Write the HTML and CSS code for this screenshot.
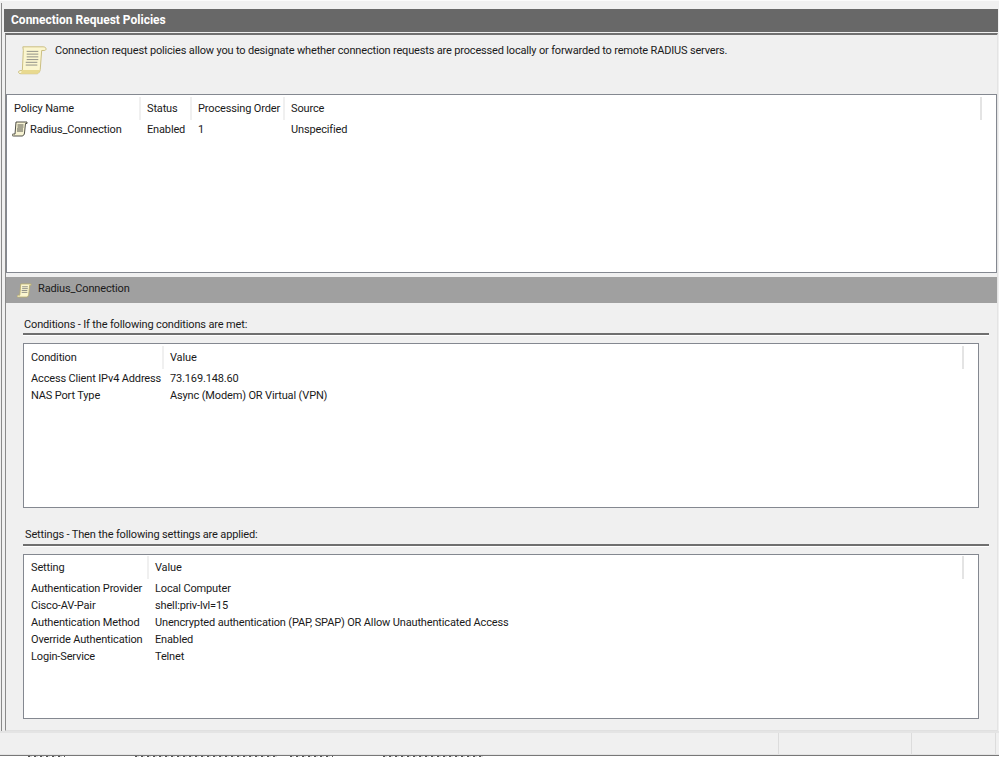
FILE: index.html
```html
<!DOCTYPE html>
<html lang="en">
<head>
<meta charset="utf-8">
<title>Connection Request Policies</title>
<link rel="stylesheet" href="styles.css">
</head>
<body>
<div class="window">
  <main class="frame">
    <h1 class="title">Connection Request Policies</h1>
    <div class="panel">
      <section class="intro">
        <svg class="scroll-large" viewBox="0 0 30 34" preserveAspectRatio="none" aria-hidden="true">
          <path d="M5 2h21c2 0 3 1 3 2.500 0 1-1 1.500-2 1.500h-2.500L23 27c-.3 2-1 3.500-3 4.500H3c-1.500 0-2.500-.8-2.500-1.700 0-1 1-1.800 2.500-1.800h1.500L5.500 6z" fill="#fbf6cf" stroke="#c8bb7c"/>
          <path d="M3 31.500h17c1.500-.8 2.500-2 2.800-4H4" fill="#e8d98f"/>
          <path d="M9 7h12M9 10h12M9 13h12M9 16h12M8 19h12M8 22h12" stroke="#8d8d85" fill="none"/>
        </svg>
        <p class="intro-text">Connection request policies allow you to designate whether connection requests are processed locally or forwarded to remote RADIUS servers.</p>
      </section>
      <section class="list list-policies">
        <div class="row head">
          <span class="cell c-name sep">Policy Name</span>
          <span class="cell c-status sep">Status</span>
          <span class="cell c-order sep">Processing Order</span>
          <span class="cell">Source</span>
          <span class="end-sep"></span>
        </div>
        <div class="row">
          <span class="cell c-name name-cell">
            <svg class="scroll-small" viewBox="0 0 16 16" aria-hidden="true">
              <path d="M4 1h11v1.500h-1.500L12.500 12c-.2 1.500-1 3-2.500 3H1.500C.5 15 0 14.500 0 14s.5-1 1.500-1H3z" fill="#f7f3d3" stroke="#3c3c34" stroke-width=".9"/>
              <path d="M5.500 4h6M5.500 6h6M5 8h6M5 10h6" stroke="#55554d" fill="none"/>
            </svg>
            <span>Radius_Connection</span>
          </span>
          <span class="cell c-status">Enabled</span>
          <span class="cell c-order">1</span>
          <span class="cell">Unspecified</span>
        </div>
      </section>
      <header class="detail-bar">
        <svg class="scroll-detail" viewBox="0 0 16 16" aria-hidden="true">
          <path d="M4 1h11v1.500h-1.500L12.500 12c-.2 1.500-1 3-2.500 3H1.500C.5 15 0 14.500 0 14s.5-1 1.500-1H3z" fill="#fbf6cf" stroke="#b8ad70" stroke-width=".9"/>
          <path d="M5.500 4h6M5.500 6h6M5 8h6M5 10h6" stroke="#8d8d85" fill="none"/>
        </svg>
        <span class="detail-name">Radius_Connection</span>
      </header>
      <section class="group">
        <h2 class="group-title">Conditions - If the following conditions are met:</h2>
        <div class="list list-conditions">
          <div class="row head">
            <span class="cell c-cond sep">Condition</span>
            <span class="cell">Value</span>
            <span class="end-sep"></span>
          </div>
          <div class="row"><span class="cell c-cond">Access Client IPv4 Address</span><span class="cell">73.169.148.60</span></div>
          <div class="row"><span class="cell c-cond">NAS Port Type</span><span class="cell">Async (Modem) OR Virtual (VPN)</span></div>
        </div>
      </section>
      <section class="group group-settings">
        <h2 class="group-title">Settings - Then the following settings are applied:</h2>
        <div class="list list-settings">
          <div class="row head">
            <span class="cell c-set sep">Setting</span>
            <span class="cell">Value</span>
            <span class="end-sep"></span>
          </div>
          <div class="row"><span class="cell c-set">Authentication Provider</span><span class="cell">Local Computer</span></div>
          <div class="row"><span class="cell c-set">Cisco-AV-Pair</span><span class="cell">shell:priv-lvl=15</span></div>
          <div class="row"><span class="cell c-set">Authentication Method</span><span class="cell">Unencrypted authentication (PAP, SPAP) OR Allow Unauthenticated Access</span></div>
          <div class="row"><span class="cell c-set">Override Authentication</span><span class="cell">Enabled</span></div>
          <div class="row"><span class="cell c-set">Login-Service</span><span class="cell">Telnet</span></div>
        </div>
      </section>
    </div>
  </main>
  <footer class="status">
    <span class="status-main"></span>
    <span class="status-a"></span>
    <span class="status-b"></span>
    <span class="status-c"></span>
  </footer>
  <div class="under">
    <span class="speck speck-1"></span>
    <span class="speck speck-2"></span>
    <span class="speck speck-3"></span>
    <span class="speck speck-4"></span>
  </div>
</div>
</body>
</html>
```
FILE: styles.css
```css
* { box-sizing: border-box; }
html, body { margin: 0; padding: 0; }
body {
  width: 999px;
  height: 757px;
  overflow: hidden;
  background: #fff;
  font-family: Roboto, "Liberation Sans", sans-serif;
  font-size: 11px;
  letter-spacing: -0.15px;
  color: #1a1a1a;
}
.window {
  height: 757px;
  display: flex;
  flex-direction: column;
  background: #f0f0f0;
  padding-top: 2px;
  border-top: 1px solid #fafafa;
}
.frame {
  flex: none;
  height: 728px;
  margin-left: 1px;
  padding: 6px 1px 0 2px;
  border-left: 1px solid #8a8a8a;
  display: flex;
  flex-direction: column;
}
.title {
  margin: 0;
  flex: none;
  height: 23px;
  background: #686868;
  color: #fff;
  font-size: 12px;
  font-weight: 700;
  letter-spacing: 0;
  line-height: 22px;
  padding-left: 7px;
}
.panel {
  flex: 1;
  margin: 1px 0 0 1px;
  border-top: 2px solid #707070;
  border-left: 1px solid #8a8a8a;
  border-bottom: 1px solid #e0e0e0;
  border-right: 1px solid #e4e4e4;
  display: flex;
  flex-direction: column;
}
.intro {
  flex: none;
  height: 59px;
  display: flex;
  padding: 8px 0 0 12px;
}
.scroll-large { width: 29px; height: 31px; flex: none; margin-top: 2px; }
.intro-text { margin: 0 0 0 8px; line-height: 16px; white-space: nowrap; letter-spacing: -0.17px; }
.list {
  background: #fff;
  border: 1px solid #848890;
  flex: none;
}
.list-policies { height: 179px; padding-top: 2px; }
.row { display: flex; align-items: center; height: 17px; white-space: nowrap; }
.head { height: 23px; }
.cell { display: block; padding: 2px 0 0 6px; }
.cell:first-child { padding-left: 7px; }
.head .cell { height: 23px; line-height: 22px; padding-top: 1px; }
.sep { border-right: 2px solid #f0f0f0; }
.end-sep { display: block; margin-left: auto; width: 2px; height: 23px; background: #e4e4e4; margin-right: 14px; }
.c-name { width: 134px; }
.c-status { width: 51px; }
.c-order { width: 93px; }
.cell.name-cell { display: flex; align-items: center; padding: 0 0 0 5px; }
.name-cell span { padding-top: 2px; }
.scroll-small { width: 16px; height: 16px; margin-right: 2px; flex: none; }
.detail-bar {
  flex: none;
  height: 26px;
  margin-top: 4px;
  background: #a0a0a0;
  display: flex;
  align-items: center;
  padding: 0 0 4px 11px;
}
.scroll-detail { width: 15px; height: 17px; margin: 4px 6px 0 0; flex: none; }
.group { flex: none; padding: 14px 8px 0 17px; }
.group-settings { padding-top: 19px; }
.group-title {
  margin: 0;
  font-size: 11px;
  font-weight: 400;
  height: 18px;
  line-height: 16px;
  border-bottom: 2px solid #6f6f6f;
  padding-left: 1px;
  box-shadow: 0 1px 0 #fff;
}
.group-settings .group-title { height: 19px; padding-left: 2px; }
.list-conditions { margin: 8px 10px 0 0; height: 165px; }
.list-settings { margin: 8px 10px 0 0; height: 165px; }
.list-conditions .head { margin: 2px 0 0; }
.list-settings .head { margin: 1px 0 0; }
.c-cond { width: 140px; }
.c-set { width: 125px; }
.status {
  flex: none;
  height: 24px;
  display: flex;
  border-top: 2px solid #e4e4e4;
  border-bottom: 1px solid #e4e4e4;
}
.status-main { width: 778px; }
.status-a { width: 133px; border-left: 1px solid #dcdcdc; }
.status-b { width: 85px; border-left: 1px solid #dcdcdc; border-right: 1px solid #dcdcdc; }
.under {
  flex: none;
  height: 2px;
  display: flex;
  background: #fff;
  border-top: 1px solid #777;
}
.speck {
  display: block;
  height: 1px;
  background: repeating-linear-gradient(90deg, #555 0 2px, #ddd 2px 4px, #fff 4px 6px);
}
.speck-1 { width: 37px; margin-left: 28px; }
.speck-2 { width: 142px; margin-left: 70px; }
.speck-3 { width: 43px; margin-left: 13px; }
.speck-4 { width: 100px; margin-left: 50px; }
```
